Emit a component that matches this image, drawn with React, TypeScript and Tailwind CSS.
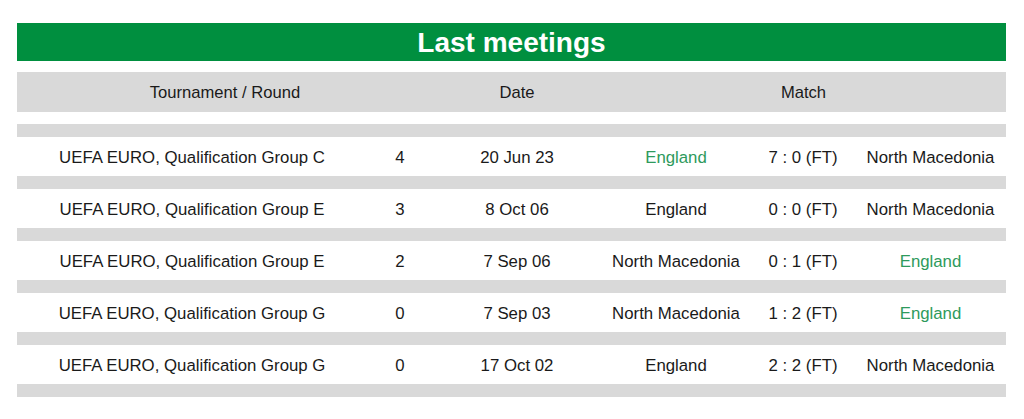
import React from "react";

interface Meeting {
  tournament: string;
  round: string;
  date: string;
  home: string;
  score: string;
  away: string;
  winner: "home" | "away" | null;
}

const meetings: Meeting[] = [
  { tournament: "UEFA EURO, Qualification Group C", round: "4", date: "20 Jun 23", home: "England", score: "7 : 0 (FT)", away: "North Macedonia", winner: "home" },
  { tournament: "UEFA EURO, Qualification Group E", round: "3", date: "8 Oct 06", home: "England", score: "0 : 0 (FT)", away: "North Macedonia", winner: null },
  { tournament: "UEFA EURO, Qualification Group E", round: "2", date: "7 Sep 06", home: "North Macedonia", score: "0 : 1 (FT)", away: "England", winner: "away" },
  { tournament: "UEFA EURO, Qualification Group G", round: "0", date: "7 Sep 03", home: "North Macedonia", score: "1 : 2 (FT)", away: "England", winner: "away" },
  { tournament: "UEFA EURO, Qualification Group G", round: "0", date: "17 Oct 02", home: "England", score: "2 : 2 (FT)", away: "North Macedonia", winner: null },
];

export default function App() {
  return (
    <div className="w-[1024px] h-[419px] bg-white font-['Liberation_Sans',Arial,sans-serif] text-[#1a1a1a] pt-[23px] pl-[17px]">
      <div className="w-[989px]">
        <div className="h-[38px] bg-[#008f3f] flex items-center justify-center">
          <h1 className="text-white font-bold text-[28px] leading-none pt-[1px]">Last meetings</h1>
        </div>

        <div className="mt-[11px] h-[40px] bg-[#d9d9d9] flex items-center text-[16.6px] pt-[3px]">
          <div className="w-[416px] text-center">Tournament / Round</div>
          <div className="w-[168px] text-center">Date</div>
          <div className="flex-1 text-center">Match</div>
        </div>

        <div className="mt-[12px]">
          {meetings.map((m, i) => (
            <div key={i}>
              <div className="h-[13px] bg-[#d9d9d9]" />
              <div className="h-[39px] flex items-center text-[16.8px] pt-[2px]">
                <div className="w-[350px] text-center">{m.tournament}</div>
                <div className="w-[66px] text-center">{m.round}</div>
                <div className="w-[168px] text-center">{m.date}</div>
                <div className={`w-[150px] text-center ${m.winner === "home" ? "text-[#2e9a5c]" : ""}`}>{m.home}</div>
                <div className="w-[104px] text-center">{m.score}</div>
                <div className={`flex-1 text-center ${m.winner === "away" ? "text-[#2e9a5c]" : ""}`}>{m.away}</div>
              </div>
            </div>
          ))}
          <div className="h-[13px] bg-[#d9d9d9]" />
        </div>
      </div>
    </div>
  );
}
